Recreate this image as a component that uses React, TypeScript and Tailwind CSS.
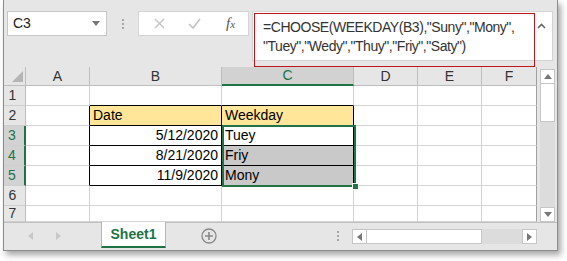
import React from 'react'

const GREEN = '#217346'

type Cell = {
  text?: string
  align?: 'left' | 'right'
  bg?: string
  blackR?: boolean
  blackB?: boolean
}

const colLetters = ['A', 'B', 'C', 'D', 'E', 'F']

// rows 1..7, cols A..F
function cellAt(r: number, c: number): Cell {
  const cell: Cell = {}
  if (c === 0 && r >= 2 && r <= 5) cell.blackR = true
  if ((c === 1 || c === 2) && r === 1) cell.blackB = true
  if ((c === 1 || c === 2) && r >= 2 && r <= 5) {
    cell.blackR = true
    cell.blackB = true
  }
  if (r === 2 && c === 1) Object.assign(cell, { text: 'Date', bg: 'bg-[#ffe699]' })
  if (r === 2 && c === 2) Object.assign(cell, { text: 'Weekday', bg: 'bg-[#ffe699]' })
  const dates = ['5/12/2020', '8/21/2020', '11/9/2020']
  const days = ['Tuey', 'Friy', 'Mony']
  if (r >= 3 && r <= 5 && c === 1) Object.assign(cell, { text: dates[r - 3], align: 'right' })
  if (r >= 3 && r <= 5 && c === 2) cell.text = days[r - 3]
  if ((r === 4 || r === 5) && c === 2) cell.bg = 'bg-[#c9c9c9]'
  return cell
}

function Triangle({ dir, className }: { dir: 'left' | 'right' | 'up' | 'down'; className?: string }) {
  const pts = {
    left: '5,0 5,8 0,4',
    right: '0,0 0,8 5,4',
    up: '0,5 8,5 4,0',
    down: '0,0 8,0 4,5',
  }[dir]
  const w = dir === 'left' || dir === 'right' ? 5 : 8
  const h = dir === 'left' || dir === 'right' ? 8 : 5
  return (
    <svg width={w} height={h} viewBox={`0 0 ${w} ${h}`} className={className}>
      <polygon points={pts} fill="currentColor" />
    </svg>
  )
}

function Dots() {
  return (
    <div className="flex flex-col gap-[2px]">
      <span className="w-[2px] h-[2px] bg-[#a6a6a6]" />
      <span className="w-[2px] h-[2px] bg-[#a6a6a6]" />
      <span className="w-[2px] h-[2px] bg-[#a6a6a6]" />
    </div>
  )
}

export default function App() {
  const rows = [1, 2, 3, 4, 5, 6, 7]

  return (
    <div className="w-[567px] h-[261px] bg-white font-['Liberation_Sans',Arial,sans-serif] text-[#222] overflow-hidden">
      <div className="relative ml-[3px] w-[555px] h-[251px] bg-[#e6e6e6] border-x border-b border-[#8c8c8c] shadow-[3px_4px_6px_rgba(0,0,0,0.35)] flex flex-col">
        {/* formula bar */}
        <div className="h-[67px] flex items-start pt-[11px] pl-[3px]">
          <div className="w-[100px] h-[25px] bg-white border border-[#c6c6c6] flex items-center justify-between pl-[5px] pr-[6px]">
            <span className="text-[14px] text-[#222]">C3</span>
            <Triangle dir="down" className="text-[#777]" />
          </div>
          <div className="w-[31px] h-[25px] flex items-center justify-center">
            <Dots />
          </div>
          <div className="w-[111px] h-[25px] bg-white border border-[#d4d4d4] flex items-center">
            <div className="w-[40px] flex justify-center">
              <svg width="11" height="11" viewBox="0 0 11 11">
                <path d="M1 1 L10 10 M10 1 L1 10" stroke="#c2c2c2" strokeWidth="1.3" />
              </svg>
            </div>
            <div className="w-[30px] flex justify-center">
              <svg width="13" height="11" viewBox="0 0 13 11">
                <path d="M1 6 L5 10 L12 1" stroke="#c2c2c2" strokeWidth="1.6" fill="none" />
              </svg>
            </div>
            <div className="flex-1 flex justify-center pl-[4px]">
              <span className="font-['Liberation_Serif',serif] italic text-[15px] text-[#555] leading-none">
                f<span className="text-[11px]">x</span>
              </span>
            </div>
          </div>
          <div className="ml-[3px] w-[301px] h-[50px] bg-white border border-[#d4d4d4] flex justify-between pl-[10px] pr-[6px] pt-[6px]">
            <div className="text-[14px] tracking-[-0.45px] leading-[19px] text-[#333]">
              <div>=CHOOSE(WEEKDAY(B3),"Suny","Mony",</div>
              <div>"Tuey","Wedy","Thuy","Friy","Saty")</div>
            </div>
            <svg width="9" height="6" viewBox="0 0 9 6" className="mt-[5px]">
              <path d="M1 5 L4.5 1.5 L8 5" stroke="#666" strokeWidth="1.6" fill="none" />
            </svg>
          </div>
        </div>

        {/* highlight box around the formula */}
        <div className="absolute left-[250px] top-[13px] w-[281px] h-[54px] border-[1.5px] border-[#c0161c]" />

        {/* sheet area */}
        <div className="h-[155px] flex">
          <div className="relative grid grid-cols-[22px_64px_132px_132px_64px_64px_55px] grid-rows-[19px_repeat(6,20px)_16px] w-[533px]">
            {/* corner */}
            <div className="relative border-r border-b border-[#bdbdbd] bg-[#e6e6e6]">
              <svg width="11" height="11" viewBox="0 0 11 11" className="absolute right-[2px] bottom-[3px]">
                <polygon points="11,0 11,11 0,11" fill="#b5b5b5" />
              </svg>
            </div>
            {colLetters.map((l, i) => (
              <div
                key={l}
                className={`flex items-center justify-center text-[14px] border-r ${
                  i === 2
                    ? 'bg-[#d2d2d2] text-[#217346] border-b-2 border-b-[#217346] border-r-[#bdbdbd]'
                    : 'bg-[#e6e6e6] text-[#333] border-b border-[#bdbdbd]'
                } ${i === 5 ? 'border-r-[#a0a0a0]' : ''}`}
              >
                {l}
              </div>
            ))}
            {rows.map((r) => (
              <React.Fragment key={r}>
                <div
                  className={`flex items-center justify-center text-[14px] pr-[4px] border-b border-b-[#cfcfcf] ${
                    r >= 3 && r <= 5
                      ? 'bg-[#d2d2d2] text-[#217346] border-r-2 border-r-[#217346]'
                      : 'bg-[#e6e6e6] text-[#333] border-r border-r-[#bdbdbd]'
                  }`}
                >
                  {r}
                </div>
                {colLetters.map((_, c) => {
                  const cell = cellAt(r, c)
                  return (
                    <div
                      key={c}
                      className={`flex items-end pb-[1px] px-[3px] text-[14px] leading-[17px] text-black border-r border-b overflow-hidden ${
                        cell.bg ?? 'bg-white'
                      } ${cell.blackR ? 'border-r-black' : c === 5 ? 'border-r-[#a0a0a0]' : 'border-r-[#d4d4d4]'} ${
                        cell.blackB ? 'border-b-black' : 'border-b-[#d4d4d4]'
                      } ${cell.align === 'right' ? 'justify-end' : 'justify-start'}`}
                    >
                      {cell.text}
                    </div>
                  )
                })}
              </React.Fragment>
            ))}

            {/* selection C3:C5 */}
            <div className="absolute left-[218px] top-[58px] w-[134px] h-[62px] border-2 border-[#217346] pointer-events-none" />
            <div className="absolute left-[348px] top-[116px] w-[7px] h-[7px] bg-[#217346] border border-white" />
          </div>

          {/* vertical scrollbar */}
          <div className="ml-[3px] w-[15px] flex flex-col pt-[2px] pb-[0px]">
            <div className="h-[15px] bg-white border border-[#c6c6c6] flex items-center justify-center">
              <Triangle dir="up" className="text-[#777]" />
            </div>
            <div className="h-[38px] bg-white border-x border-b border-[#c6c6c6]" />
            <div className="flex-1 bg-[#dcdcdc]" />
            <div className="h-[15px] bg-white border border-[#c6c6c6] flex items-center justify-center">
              <Triangle dir="down" className="text-[#777]" />
            </div>
          </div>
        </div>

        {/* sheet tabs */}
        <div className="h-[28px] border-t border-[#c0c0c0] flex items-start">
          <div className="w-[97px] h-[26px] flex items-center pl-[24px] gap-[23px] text-[#c8c8c8]">
            <Triangle dir="left" />
            <Triangle dir="right" />
          </div>
          <div
            className="-mt-px w-[65px] h-[26px] bg-white border-x border-[#b5b5b5] border-b-2 border-b-[#217346] flex items-center justify-center text-[14px] font-bold"
            style={{ color: GREEN }}
          >
            Sheet1
          </div>
          <div className="w-[86px] h-[26px] flex items-center justify-center">
            <svg width="16" height="16" viewBox="0 0 16 16">
              <circle cx="8" cy="8" r="7" stroke="#888" strokeWidth="1.3" fill="none" />
              <path d="M8 4 V12 M4 8 H12" stroke="#888" strokeWidth="1.6" />
            </svg>
          </div>
          <div className="w-[100px] h-[26px] flex items-center justify-end pr-[13px]">
            <Dots />
          </div>
          <div className="mt-[6px] w-[185px] h-[15px] flex">
            <div className="w-[15px] h-full bg-white border border-[#c6c6c6] flex items-center justify-center text-[#777]">
              <Triangle dir="left" />
            </div>
            <div className="w-[115px] h-full bg-white border-y border-r border-[#c6c6c6]" />
            <div className="flex-1 h-full bg-[#dcdcdc]" />
            <div className="w-[15px] h-full bg-white border border-[#c6c6c6] flex items-center justify-center text-[#777]">
              <Triangle dir="right" />
            </div>
          </div>
        </div>
      </div>
    </div>
  )
}
